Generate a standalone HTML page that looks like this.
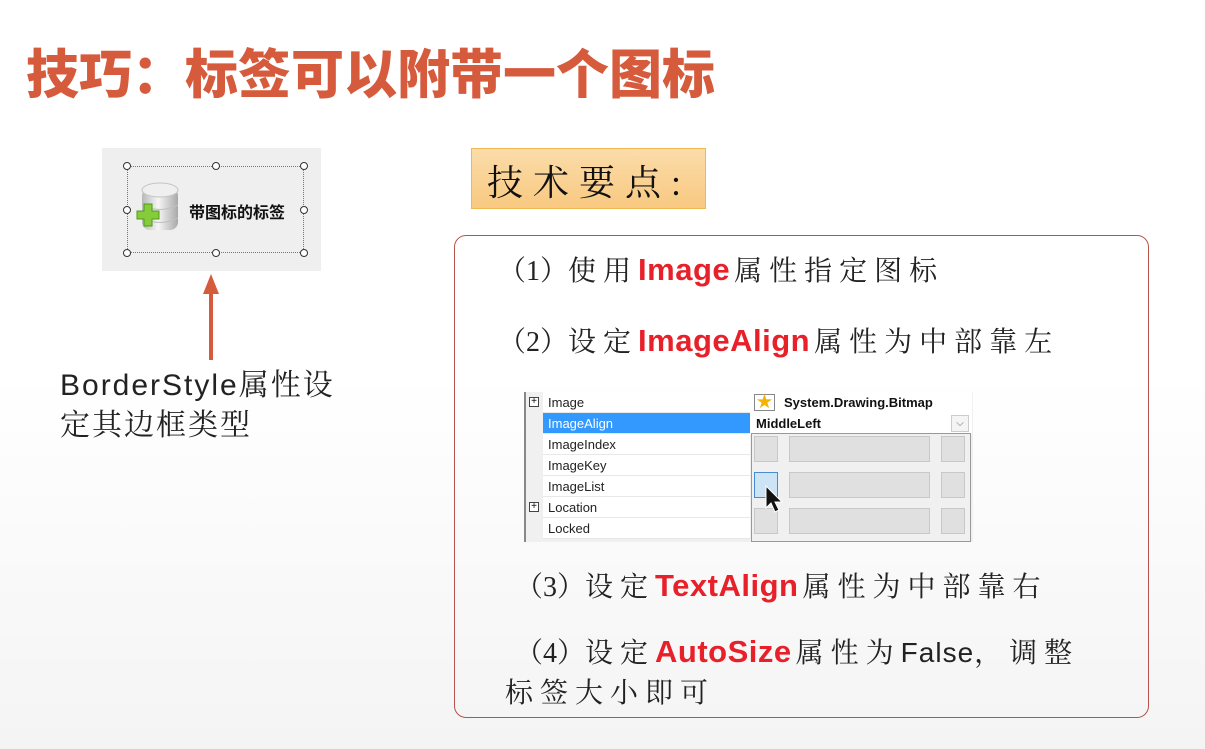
<!DOCTYPE html>
<html><head><meta charset="utf-8"><style>
*{margin:0;padding:0;box-sizing:border-box}
body{width:1205px;height:749px;position:relative;overflow:hidden;background:linear-gradient(#fff 0%,#fff 50%,#f4f4f4 100%);font-family:"Liberation Sans","Noto Sans CJK SC",sans-serif}
.abs{position:absolute}
h1{position:absolute;left:26px;top:38px;font-size:53px;font-weight:900;color:#d65a3c;white-space:nowrap;font-family:"Noto Sans CJK SC",sans-serif;line-height:66px}
.serif{font-family:"Liberation Serif","Noto Serif CJK SC",serif}
.t{position:absolute;font-size:28px;color:#222;white-space:nowrap;font-family:"Liberation Serif","Noto Serif CJK SC",serif;line-height:36px;letter-spacing:7px}
.p{letter-spacing:0}
.r{color:#e8202a;font-weight:bold;font-family:"Liberation Sans","Noto Sans CJK SC",sans-serif;font-size:31px;letter-spacing:0.5px;margin-right:4px}
.s{font-family:"Liberation Sans",sans-serif;letter-spacing:1px;font-size:28px}
.h{position:absolute;width:8px;height:8px;border:1px solid #333;border-radius:50%;background:#fff}
.row{position:absolute;left:543px;width:207px;height:21px;font-size:13px;line-height:21px;padding-left:5px;color:#222;border-bottom:1px solid #e8e8e8;background:#fff}
.c{position:absolute;background:#e0e0e0;border:1px solid #c8c8c8}
</style></head><body>
<h1>技巧：标签可以附带一个图标</h1>

<div class="abs" style="left:102px;top:148px;width:219px;height:123px;background:#efefef"></div>
<div class="abs" style="left:127px;top:166px;width:177px;height:87px;border:1px dotted #777"></div>
<div class="h" style="left:123px;top:162px"></div><div class="h" style="left:212px;top:162px"></div><div class="h" style="left:300px;top:162px"></div>
<div class="h" style="left:123px;top:206px"></div><div class="h" style="left:300px;top:206px"></div>
<div class="h" style="left:123px;top:249px"></div><div class="h" style="left:212px;top:249px"></div><div class="h" style="left:300px;top:249px"></div>
<svg class="abs" style="left:134px;top:181px" width="48" height="54">
<defs><linearGradient id="g" x1="0" x2="1"><stop offset="0" stop-color="#b8b8b8"/><stop offset=".45" stop-color="#f6f6f6"/><stop offset="1" stop-color="#a8a8a8"/></linearGradient></defs>
<rect x="8" y="7" width="36" height="42" rx="8" fill="url(#g)"/>
<ellipse cx="26" cy="9" rx="18" ry="7" fill="#efefef" stroke="#c4c4c4"/>
<path d="M8 24q18 9 36 0M8 37q18 9 36 0" stroke="#c0c0c0" fill="none"/>
<path d="M3 30h7v-7h8v7h7v8h-7v7h-8v-7h-7z" fill="#86cc3a" stroke="#4f9a1c"/>
</svg>
<div class="abs" style="left:189px;top:199px;font-size:16px;font-weight:bold;color:#111;font-family:'Noto Sans CJK SC',sans-serif">带图标的标签</div>

<div class="abs" style="left:209px;top:292px;width:4px;height:68px;background:#d65a3c"></div>
<div class="abs" style="left:203px;top:274px;width:0;height:0;border-left:8px solid transparent;border-right:8px solid transparent;border-bottom:20px solid #d65a3c"></div>
<div class="abs" style="left:60px;top:366px;font-size:30px;line-height:40px;color:#222;letter-spacing:2px;white-space:nowrap;font-family:'Liberation Sans','Noto Serif CJK SC',serif">BorderStyle属性设<br>定其边框类型</div>

<div class="abs" style="left:471px;top:148px;width:235px;height:61px;background:linear-gradient(#fbdca9,#f8c981);border:1px solid #f0b850"></div>
<div class="abs serif" style="left:487px;top:155px;font-size:36px;letter-spacing:10px;color:#111;white-space:nowrap">技术要点:</div>

<div class="abs" style="left:454px;top:235px;width:695px;height:483px;border:1.5px solid #b5544a;border-radius:12px"></div>
<div class="t" style="left:498px;top:252px"><span class="p">（1）</span>使用<span class="r">Image</span>属性指定图标</div>
<div class="t" style="left:498px;top:323px"><span class="p">（2）</span>设定<span class="r">ImageAlign</span>属性为中部靠左</div>
<div class="t" style="left:515px;top:568px"><span class="p">（3）</span>设定<span class="r">TextAlign</span>属性为中部靠右</div>
<div class="t" style="left:515px;top:634px"><span class="p">（4）</span>设定<span class="r">AutoSize</span>属性为<span class="s">False</span>，调整</div>
<div class="t" style="left:505px;top:676px">标签大小即可</div>

<div class="abs" style="left:524px;top:392px;width:449px;height:150px;background:#f0f0f0;border-left:2px solid #888"></div>
<div class="row" style="top:392px">Image</div>
<div class="row" style="top:413px;background:#3399ff;color:#fff">ImageAlign</div>
<div class="row" style="top:434px">ImageIndex</div>
<div class="row" style="top:455px">ImageKey</div>
<div class="row" style="top:476px">ImageList</div>
<div class="row" style="top:497px">Location</div>
<div class="row" style="top:518px">Locked</div>
<div class="abs" style="left:529px;top:397px;width:10px;height:10px;border:1px solid #444;font-size:10px;line-height:8px;text-align:center;background:#fff">+</div>
<div class="abs" style="left:529px;top:502px;width:10px;height:10px;border:1px solid #444;font-size:10px;line-height:8px;text-align:center;background:#fff">+</div>
<div class="abs" style="left:750px;top:392px;width:222px;height:42px;background:#fff"></div>
<div class="abs" style="left:754px;top:394px;width:21px;height:17px;border:1px solid #888;background:#fff;color:#f3b400;font-size:16px;line-height:15px;text-align:center">★</div>
<div class="abs" style="left:784px;top:395px;font-size:13px;font-weight:bold;color:#111">System.Drawing.Bitmap</div>
<div class="abs" style="left:756px;top:416px;font-size:13px;font-weight:bold;color:#111">MiddleLeft</div>
<div class="abs" style="left:951px;top:415px;width:18px;height:17px;border:1px solid #ccc;background:#f4f4f4;font-size:10px;text-align:center;color:#666;line-height:15px">⌵</div>
<div class="abs" style="left:751px;top:433px;width:220px;height:109px;background:#f0f0f0;border:1px solid #999"></div>
<div class="c" style="left:754px;top:436px;width:24px;height:26px"></div>
<div class="c" style="left:789px;top:436px;width:141px;height:26px"></div>
<div class="c" style="left:941px;top:436px;width:24px;height:26px"></div>
<div class="c" style="left:754px;top:472px;width:24px;height:26px;background:#cde4f7;border-color:#4a8bd0"></div>
<div class="c" style="left:789px;top:472px;width:141px;height:26px"></div>
<div class="c" style="left:941px;top:472px;width:24px;height:26px"></div>
<div class="c" style="left:754px;top:508px;width:24px;height:26px"></div>
<div class="c" style="left:789px;top:508px;width:141px;height:26px"></div>
<div class="c" style="left:941px;top:508px;width:24px;height:26px"></div>
<svg class="abs" style="left:765px;top:485px" width="20" height="30"><path d="M1 1v22l5-5 4 9 4-2-4-8h7z" fill="#111" stroke="#fff" stroke-width="1"/></svg>
</body></html>
